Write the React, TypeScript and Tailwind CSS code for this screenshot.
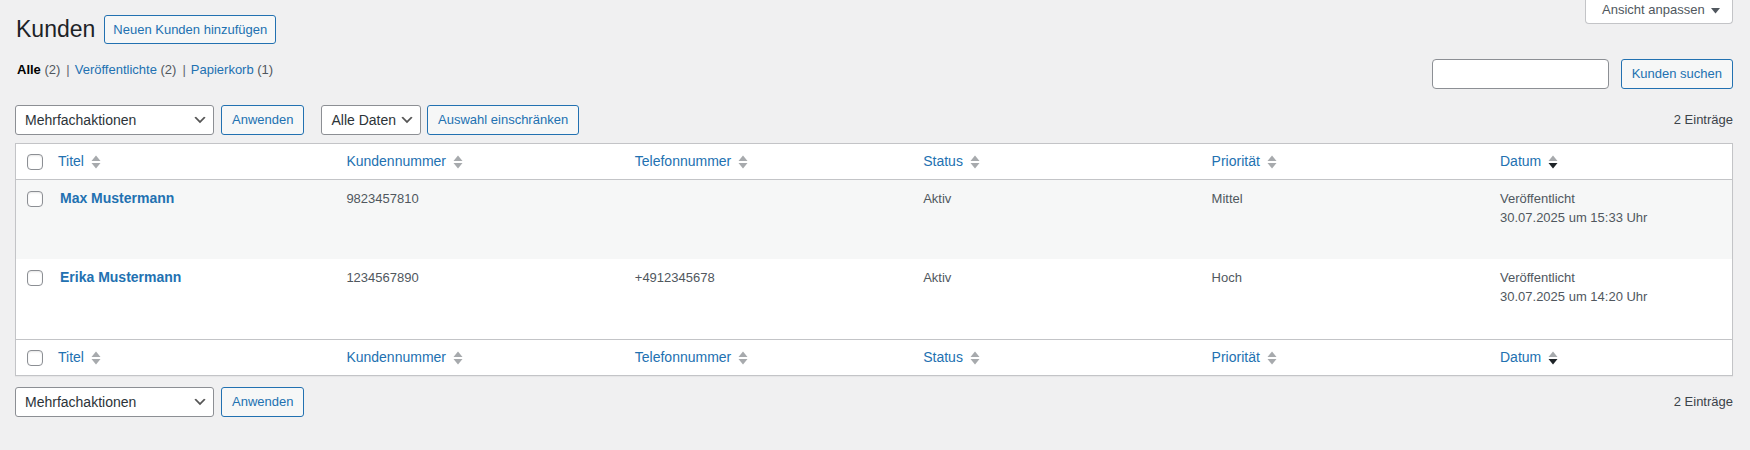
import React from 'react'

type Customer = {
  name: string
  number: string
  phone: string
  status: string
  priority: string
  date: string
}

const customers: Customer[] = [
  { name: 'Max Mustermann', number: '9823457810', phone: '', status: 'Aktiv', priority: 'Mittel', date: '30.07.2025 um 15:33 Uhr' },
  { name: 'Erika Mustermann', number: '1234567890', phone: '+4912345678', status: 'Aktiv', priority: 'Hoch', date: '30.07.2025 um 14:20 Uhr' },
]

const columns = ['Titel', 'Kundennummer', 'Telefonnummer', 'Status', 'Priorität', 'Datum']

const gridCols = 'grid grid-cols-[32px_repeat(5,minmax(0,1fr))_242px]'

function Checkbox() {
  return (
    <span className="block w-4 h-4 rounded-[4px] border border-[#8c8f94] bg-white shadow-[inset_0_1px_2px_rgba(0,0,0,0.1)]" />
  )
}

function SortIcon({ active = false }: { active?: boolean }) {
  return (
    <svg width="10" height="14" viewBox="0 0 10 14" className="ml-[7px] shrink-0">
      <path d="M5 0.5 L9.5 6 L0.5 6 Z" fill="#a7aaad" />
      <path d="M0.5 8 L9.5 8 L5 13.5 Z" fill={active ? '#1d2327' : '#a7aaad'} />
    </svg>
  )
}

function Chevron() {
  return (
    <svg width="16" height="16" viewBox="0 0 20 20" className="shrink-0">
      <path d="M5 6l5 5 5-5 2 1-7 7-7-7 2-1z" fill="#555" />
    </svg>
  )
}

function Select({ label, width }: { label: string; width?: string }) {
  return (
    <div
      className={`flex items-center justify-between h-[30px] pl-[9px] pr-[5px] gap-[3px] rounded-[3px] border border-[#8c8f94] bg-white text-[14px] text-[#2c3338] ${width ?? ''}`}
    >
      <span className="leading-[28px] whitespace-nowrap">{label}</span>
      <Chevron />
    </div>
  )
}

function Button({ children }: { children: React.ReactNode }) {
  return (
    <button className="h-[30px] px-[10px] rounded-[3px] border border-[#2271b1] bg-[#f6f7f7] text-[13px] leading-[28px] text-[#2271b1] whitespace-nowrap">
      {children}
    </button>
  )
}

function HeaderRow({ footer = false }: { footer?: boolean }) {
  return (
    <div className={`${gridCols} h-[36px] ${footer ? 'border-t' : 'border-b'} border-[#c3c4c7]`}>
      <div className="flex items-center pl-[11px]">
        <Checkbox />
      </div>
      {columns.map((c) => (
        <div key={c} className="flex items-center px-[10px] text-[14px] text-[#2271b1]">
          <span>{c}</span>
          <SortIcon active={c === 'Datum'} />
        </div>
      ))}
    </div>
  )
}

function BulkActions() {
  return (
    <div className="flex items-center">
      <Select label="Mehrfachaktionen" width="w-[199px]" />
      <div className="ml-[7px]">
        <Button>Anwenden</Button>
      </div>
    </div>
  )
}

export default function App() {
  return (
    <div className="min-h-[450px] w-full bg-[#f0f0f1] pl-[15px] pr-[17px] font-['Liberation_Sans',Arial,sans-serif] text-[13px] text-[#3c434a]">
      {/* Title + screen options */}
      <div className="flex items-start justify-between">
        <div className="flex items-center gap-[9px] pt-[15px] pl-[1px]">
          <h1 className="text-[23px] leading-[29px] text-[#1d2327]">Kunden</h1>
          <button className="h-[29px] px-[8px] rounded-[3px] border border-[#2271b1] bg-[#f6f7f7] text-[13px] leading-[20px] text-[#2271b1] whitespace-nowrap">
            Neuen Kunden hinzufügen
          </button>
        </div>
        <button className="flex items-start gap-[6px] h-[24px] w-[148px] pl-[16px] pt-[1px] border border-t-0 border-[#c3c4c7] rounded-b-[4px] bg-white text-[13px] leading-[18px] text-[#50575e]">
          <span>Ansicht anpassen</span>
          <svg width="9" height="6" viewBox="0 0 9 6" className="mt-[7px]">
            <path d="M0 0 L9 0 L4.5 5.5 Z" fill="#50575e" />
          </svg>
        </button>
      </div>

      {/* Views + search */}
      <div className="flex items-start justify-between mt-[15px]">
        <div className="pt-[1px] pl-[2px] leading-[20px] text-[#646970]">
          <span className="font-bold text-black">Alle</span> <span className="text-[#50575e]">(2)</span>
          <span className="ml-[6px] mr-[5px]">|</span>
          <span className="text-[#2271b1]">Veröffentlichte <span className="text-[#50575e]">(2)</span></span>
          <span className="ml-[6px] mr-[5px]">|</span>
          <span className="text-[#2271b1]">Papierkorb <span className="text-[#50575e]">(1)</span></span>
        </div>
        <div className="flex items-center gap-[12px]">
          <input className="h-[30px] w-[177px] rounded-[4px] border border-[#8c8f94] bg-white px-[8px] text-[14px] outline-none" />
          <Button>Kunden suchen</Button>
        </div>
      </div>

      {/* Top tablenav */}
      <div className="flex items-center justify-between mt-[16px]">
        <div className="flex items-center">
          <BulkActions />
          <div className="ml-[17px]">
            <Select label="Alle Daten" />
          </div>
          <div className="ml-[6px]">
            <Button>Auswahl einschränken</Button>
          </div>
        </div>
        <span className="text-[#3c434a]">2 Einträge</span>
      </div>

      {/* Table */}
      <div className="mt-[8px] border border-[#c3c4c7] bg-white shadow-[0_1px_1px_rgba(0,0,0,0.04)]">
        <HeaderRow />
        {customers.map((c, i) => (
          <div key={c.name} className={`${gridCols} ${i === 0 ? 'h-[79px] bg-[#f6f7f7]' : 'h-[80px] bg-white'}`}>
            <div className="pl-[11px] pt-[11px]">
              <Checkbox />
            </div>
            <div className="pl-[12px] pr-[10px] pt-[8px] text-[14px] leading-[20px] font-bold text-[#2271b1]">
              {c.name}
            </div>
            <div className="px-[10px] pt-[9px] leading-[19px] text-[#50575e]">{c.number}</div>
            <div className="px-[10px] pt-[9px] leading-[19px] text-[#50575e]">{c.phone}</div>
            <div className="px-[10px] pt-[9px] leading-[19px] text-[#50575e]">{c.status}</div>
            <div className="px-[10px] pt-[9px] leading-[19px] text-[#50575e]">{c.priority}</div>
            <div className="px-[10px] pt-[9px] leading-[19px] text-[#50575e]">
              <div>Veröffentlicht</div>
              <div>{c.date}</div>
            </div>
          </div>
        ))}
        <HeaderRow footer />
      </div>

      {/* Bottom tablenav */}
      <div className="flex items-center justify-between mt-[11px]">
        <BulkActions />
        <span className="text-[#3c434a]">2 Einträge</span>
      </div>
    </div>
  )
}
